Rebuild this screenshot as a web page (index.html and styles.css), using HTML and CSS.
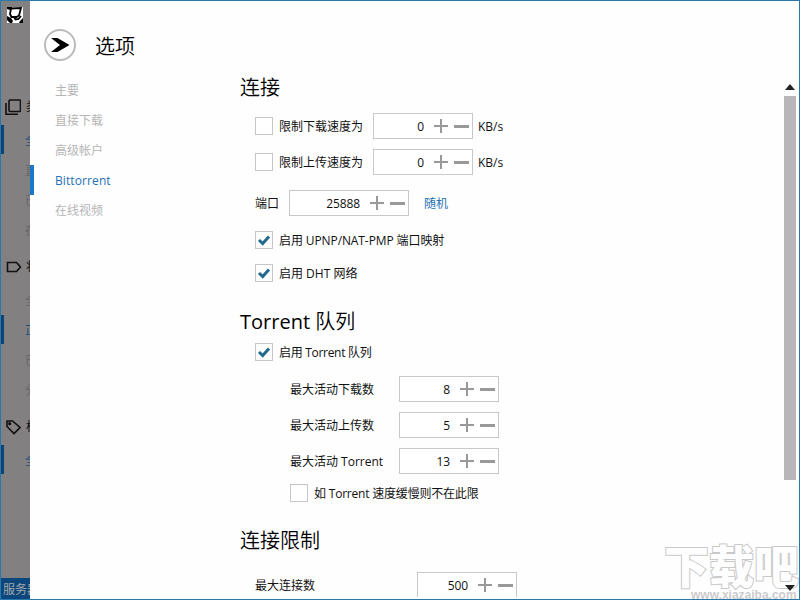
FILE: index.html
```
<!DOCTYPE html>
<html lang="zh-CN">
<head>
    <meta charset="UTF-8">
    <meta name="viewport" content="width=device-width, initial-scale=1.0">
    <title>选项</title>
<link rel="stylesheet" href="styles.css">
</head>
<body>
<svg class="defs" width="0" height="0">
    <symbol id="step" viewBox="0 0 35 14"><path d="M0 6h14v2H0zM6 0h2v14H6zM20 6h15v3H20z" /></symbol>
    <symbol id="check" viewBox="0 0 16 16"><path d="M3 8l3.700 3.500L13 4.500" /></symbol>
</svg>
<div class="window">
    <div class="side">
        <svg class="logo" viewBox="0 0 16 16"><path fill="#fff" d="M0 0h16v16H0z"/><path d="M0 0h5v2L3 3 0 2zM0 9l4 2 2 3-1 2H3L0 13zM13 14l3-3v5h-4z"/><path d="M4 1.500l10-.5-2 7.500-2.500 1.500H4.500L3 7zM7 10l1.500 2.500 3-.5 2.500-3" fill="none" stroke="#000" stroke-width="1.800"/></svg>
        <div class="group">
            <div class="group-title">
                <svg class="icon" viewBox="0 0 16 16"><rect x="4" y="1" width="11.500" height="11.500" rx="1"/><path d="M1 4v11.200h12"/></svg>
                <span>类别</span>
            </div>
            <div class="side-item on">全部</div>
            <div class="side-item">直接</div>
            <div class="side-item">已完成</div>
            <div class="side-item">在线</div>
        </div>
        <div class="group">
            <div class="group-title">
                <svg class="icon" viewBox="0 0 16 16"><path d="M2.500 3.500h9l4 4.500-4 4.500h-9z"/></svg>
                <span>状态</span>
            </div>
            <div class="side-item">全部</div>
            <div class="side-item on">正在</div>
            <div class="side-item">已完成</div>
            <div class="side-item">分享</div>
        </div>
        <div class="group">
            <div class="group-title">
                <svg class="icon" viewBox="0 0 16 16"><path d="M2 2h5.500l7.500 6.500-6 6-7-7z"/><circle cx="4.700" cy="4.700" r=".8"/></svg>
                <span>标签</span>
            </div>
            <div class="side-item on">全部</div>
        </div>
        <div class="status">服务器</div>
    </div>
    <div class="panel">
        <div class="header">
            <svg class="back" viewBox="0 0 32 32"><circle cx="16" cy="16" r="15" fill="#fff" stroke="#bbb" stroke-width="2"/><path d="M7 9h6.500L25.500 16l-12 7H7l9-7z"/></svg>
            <h1>选项</h1>
        </div>
        <div class="main">
            <ul class="menu">
                <li>主要</li>
                <li>直接下载</li>
                <li>高级帐户</li>
                <li class="active">Bittorrent</li>
                <li>在线视频</li>
            </ul>
            <div class="content">
                <h2>连接</h2>
                <div class="section speed">
                    <div class="row"><i class="box"></i><span class="label">限制下载速度为</span><div class="spin"><b>0</b><svg><use href="#step"/></svg></div><span class="unit">KB/s</span></div>
                    <div class="row"><i class="box"></i><span class="label">限制上传速度为</span><div class="spin"><b>0</b><svg><use href="#step"/></svg></div><span class="unit">KB/s</span></div>
                    <div class="row port"><span class="label">端口</span><div class="spin"><b>25888</b><svg><use href="#step"/></svg></div><a class="link">随机</a></div>
                    <div class="row check"><i class="box"><svg><use href="#check"/></svg></i><span class="label upnp">启用 UPNP/NAT-PMP 端口映射</span></div>
                    <div class="row check"><i class="box"><svg><use href="#check"/></svg></i><span class="label">启用 DHT 网络</span></div>
                </div>
                <h2><span class="latin">Torrent</span> 队列</h2>
                <div class="section queue">
                    <div class="row"><i class="box"><svg><use href="#check"/></svg></i><span class="label enable">启用 Torrent 队列</span></div>
                    <div class="sub">
                        <div class="row"><span class="label">最大活动下载数</span><div class="spin"><b>8</b><svg><use href="#step"/></svg></div></div>
                        <div class="row"><span class="label">最大活动上传数</span><div class="spin"><b>5</b><svg><use href="#step"/></svg></div></div>
                        <div class="row"><span class="label">最大活动 Torrent</span><div class="spin"><b>13</b><svg><use href="#step"/></svg></div></div>
                        <div class="row slow"><i class="box"></i><span class="label">如 Torrent 速度缓慢则不在此限</span></div>
                    </div>
                </div>
                <h2>连接限制</h2>
                <div class="section limit">
                    <div class="row"><span class="label">最大连接数</span><div class="spin"><b>500</b><svg><use href="#step"/></svg></div></div>
                </div>
            </div>
            <div class="scroll">
                <svg class="arrow" viewBox="0 0 10 6"><path d="M0 6l5-6 5 6z"/></svg>
                <div class="thumb"></div>
            </div>
        </div>
    </div>
    <div class="mark">
        <div class="mark-name">下载吧</div>
        <div class="mark-url">www.xiazaiba.com</div>
    </div>
    <svg class="arrow down" viewBox="0 0 10 6"><path d="M0 0h10l-5 6z"/></svg>
</div>
</body>
</html>
```
FILE: styles.css
```
* {box-sizing: border-box;}
body {margin: 0;font: 12px/16px "Open Sans", "Noto Sans CJK SC", sans-serif;color: #111;}
h1, h2, ul {margin: 0;padding: 0;font-weight: 400;list-style: none;}
.defs {position: absolute;}
.window {position: relative;display: flex;width: 800px;height: 600px;border: 1px solid #2878ad;overflow: hidden;background: #fefefe;}

/* dimmed sidebar */
.side {display: flex;flex-direction: column;flex: none;width: 29px;background: #828081;overflow: hidden;white-space: nowrap;}
.logo {width: 16px;height: 16px;margin: 6px 0 69px 6px;flex: none;}
.group {height: 160px;flex: none;}
.group-title {display: flex;align-items: center;height: 30px;margin-bottom: 3px;padding-left: 4px;gap: 5px;color: #111;}
.icon {width: 16px;height: 16px;flex: none;fill: none;stroke: #111;stroke-width: 1.6;}
.side-item {height: 30px;line-height: 31px;padding-left: 24px;color: #666;}
.side-item.on {height: 29px;margin-bottom: 1px;border-left: 3px solid #0b4375;padding-left: 21px;color: #174c78;}
.status {margin-top: auto;height: 21px;line-height: 23px;padding-left: 2px;background: #0b477c;color: #a6a8aa;}

/* options */
.panel {flex: 1;height: 596px;overflow: hidden;}
.header {display: flex;align-items: center;height: 71px;padding-left: 14px;}
.back {width: 32px;height: 32px;margin: 32px 19px 15px 0;}
h1 {font-size: 20px;line-height: 30px;margin-top: 20px;}
.main {display: flex;height: 525px;}
.menu {width: 210px;padding-top: 3px;flex: none;}
.menu li {height: 30px;line-height: 32px;padding-left: 25px;color: #b5b5b5;}
.menu .active {border-left: 4px solid #1b78c8;padding-left: 21px;color: #1e72b5;letter-spacing: .1px;}
.content {flex: 1;}
h2 {height: 30px;font-size: 20px;line-height: 31px;}
h1, h2 {font-weight: 350;color: #000;}
.latin {font-weight: 500;}
.row {display: flex;align-items: center;height: 36px;white-space: nowrap;}
.section {padding-left: 15px;}
.label, .unit, .link, .spin b {padding-top: 2px;}
.box {width: 18px;height: 18px;margin-right: 6px;border: 1px solid #c6c6c6;background: #fff;flex: none;}
.box svg {display: block;width: 16px;height: 16px;fill: none;stroke: #22698f;stroke-width: 3;}
.spin {display: flex;align-items: center;justify-content: flex-end;width: 100px;height: 26px;border: 1px solid #c8c8c8;background: #fff;flex: none;}
.spin b {font-weight: 400;margin-right: 10px;letter-spacing: -.1px;}
.spin svg {width: 35px;height: 14px;margin-right: 3px;fill: #999;}
.unit {margin-left: 5px;}
.link {margin-left: 15px;color: #1e72b5;}
.speed {height: 204px;padding-top: 6px;}
.speed .label {width: 94px;}
.speed .port {margin: 5px 0 3px;}
.port .label {width: 34px;}
.port .spin {width: 120px;}
.speed .check {height: 32px;margin-bottom: 1px;}
.upnp {letter-spacing: -.1px;}
.queue {height: 189px;}
.queue .row {height: 32px;}
.enable {letter-spacing: -.3px;}
.sub {padding: 3px 0 0 35px;}
.queue .sub .row {height: 36px;}
.sub .label {width: 109px;}
.queue .sub .slow {height: 28px;letter-spacing: -.2px;}
.limit {padding-top: 12px;}
.limit .label {width: 162px;}

.scroll {display: flex;flex-direction: column;align-items: center;width: 12px;margin-right: 3px;padding-top: 12px;}
.arrow {width: 10px;height: 6px;fill: #222;flex: none;}
.thumb {width: 12px;height: 384px;margin-top: 6px;background: #b8b6b8;}

/* watermark over the corner */
.mark {position: absolute;left: 663px;top: 539px;width: 136px;height: 60px;font-family: "Noto Sans CJK SC", sans-serif;color: #fefefe;}
.mark-name {font-size: 45px;font-weight: 900;line-height: 50px;-webkit-text-stroke: 2px #c8c8c8;paint-order: stroke fill;}
.mark-url {position: absolute;left: 27px;top: 49px;font: bold 12px/12px "Liberation Sans", sans-serif;color: #ccc;}
.down {position: absolute;left: 784px;top: 584px;}
```
